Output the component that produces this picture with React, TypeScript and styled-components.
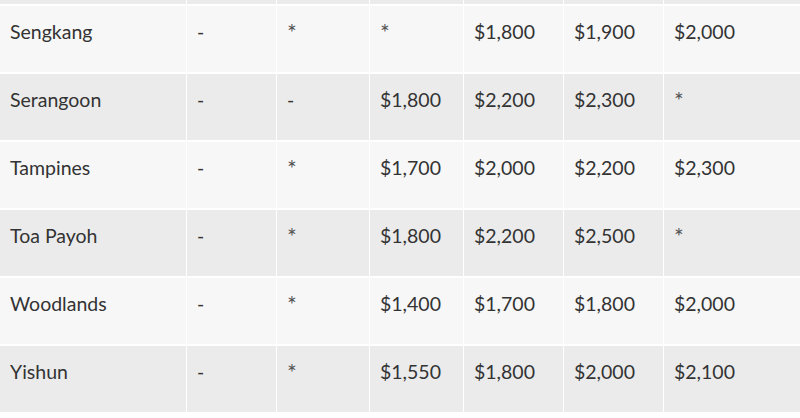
import React from "react";
import styled, { createGlobalStyle } from "styled-components";

type Row = { town: string; cells: string[] };

const rows: Row[] = [
  { town: "Sengkang", cells: ["-", "*", "*", "$1,800", "$1,900", "$2,000"] },
  { town: "Serangoon", cells: ["-", "-", "$1,800", "$2,200", "$2,300", "*"] },
  { town: "Tampines", cells: ["-", "*", "$1,700", "$2,000", "$2,200", "$2,300"] },
  { town: "Toa Payoh", cells: ["-", "*", "$1,800", "$2,200", "$2,500", "*"] },
  { town: "Woodlands", cells: ["-", "*", "$1,400", "$1,700", "$1,800", "$2,000"] },
  { town: "Yishun", cells: ["-", "*", "$1,550", "$1,800", "$2,000", "$2,100"] },
];

const GlobalStyle = createGlobalStyle`
  body {
    margin: 0;
    background: #ffffff;
    font-family: Lato, "Open Sans", sans-serif;
    overflow: hidden;
  }
`;

const Table = styled.div`
  display: flex;
  flex-direction: column;
`;

const RowLine = styled.div<{ $shade: boolean; $tail?: boolean }>`
  display: grid;
  grid-template-columns: 187px 90px 93px 94px 100px 100px 1fr;
  height: ${(p) => (p.$tail ? "4px" : "66px")};
  border-bottom: 2px solid #ffffff;
  background: ${(p) => (p.$shade ? "#ebebeb" : "#f7f7f7")};
`;

const Cell = styled.div<{ $star?: boolean }>`
  padding: 13px 0 0 10px;
  border-right: 1px solid #ffffff;
  font-size: ${(p) => (p.$star ? "23px" : "19.5px")};
  line-height: 26px;
  color: ${(p) => (p.$star ? "#555555" : "#333333")};
  white-space: nowrap;
  &:last-child {
    border-right: none;
  }
`;

const Blank = styled.div`
  border-right: 1px solid #ffffff;
  &:last-child {
    border-right: none;
  }
`;

export default function App() {
  return (
    <>
      <GlobalStyle />
      <Table>
        <RowLine $shade $tail>
          {Array.from({ length: 7 }, (_, k) => (
            <Blank key={k} />
          ))}
        </RowLine>
        {rows.map((r, i) => (
          <RowLine key={r.town} $shade={i % 2 === 1}>
            <Cell>{r.town}</Cell>
            {r.cells.map((c, j) => (
              <Cell key={j} $star={c === "*"}>
                {c}
              </Cell>
            ))}
          </RowLine>
        ))}
      </Table>
    </>
  );
}
